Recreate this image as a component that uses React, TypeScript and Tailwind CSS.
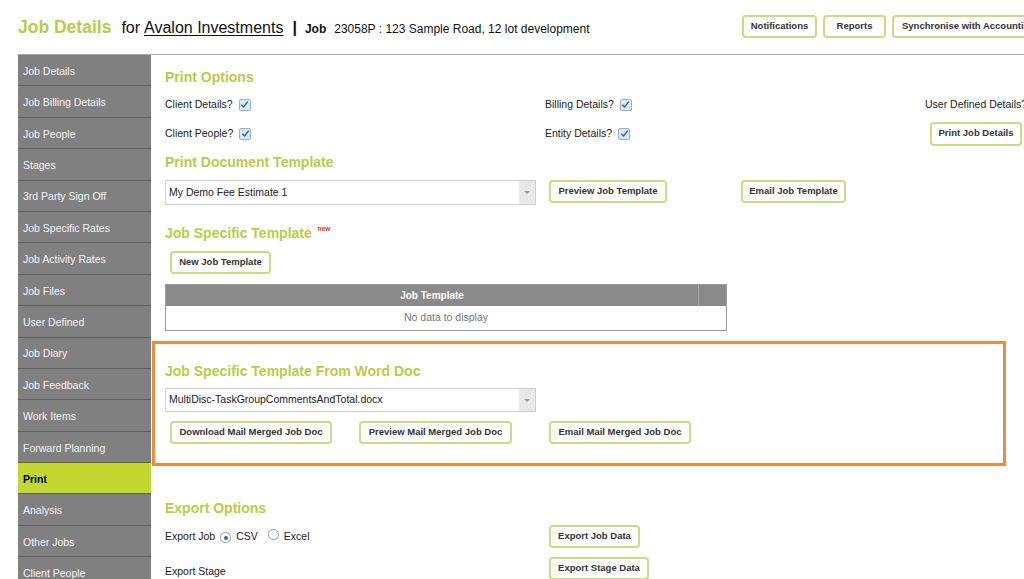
import React from "react";

const green = "text-[#b6cd45]";

function Btn({ children, className = "" }: { children: React.ReactNode; className?: string }) {
  return (
    <div
      className={
        "flex h-[23px] shrink-0 items-center justify-center whitespace-nowrap rounded-[4px] border-2 border-[#cadb80] bg-white px-[6px] text-[9.5px] font-bold text-[#333] " +
        className
      }
    >
      {children}
    </div>
  );
}

function Check() {
  return (
    <span className="ml-[6px] inline-flex h-[12px] w-[12px] items-center justify-center rounded-[2px] border border-[#9db0c8] bg-[#dbe7f4]">
      <svg width="9" height="9" viewBox="0 0 10 10">
        <path d="M1.5 5.2 L4 7.8 L8.6 1.8" fill="none" stroke="#2463ad" strokeWidth="1.6" />
      </svg>
    </span>
  );
}

function Radio({ on }: { on?: boolean }) {
  return (
    <span className="inline-flex h-[11px] w-[11px] items-center justify-center rounded-full border border-[#9a9a9a] bg-white">
      {on && <span className="h-[4px] w-[4px] rounded-full bg-[#2a66b8]" />}
    </span>
  );
}

function Select({ value }: { value: string }) {
  return (
    <div className="flex h-full w-[371px] border border-[#cfcfcf] bg-white">
      <div className="flex flex-1 items-center pl-[3px] text-[10.5px] text-[#222]">{value}</div>
      <div className="flex w-[16px] items-center justify-center bg-[#e8e8e8]">
        <span className="h-0 w-0 border-x-[3px] border-t-[3px] border-x-transparent border-t-[#999]" />
      </div>
    </div>
  );
}

function Heading({ children }: { children: React.ReactNode }) {
  return <div className={"h-[20px] text-[14px] font-bold leading-[20px] " + green}>{children}</div>;
}

const items = [
  "Job Details",
  "Job Billing Details",
  "Job People",
  "Stages",
  "3rd Party Sign Off",
  "Job Specific Rates",
  "Job Activity Rates",
  "Job Files",
  "User Defined",
  "Job Diary",
  "Job Feedback",
  "Work Items",
  "Forward Planning",
  "Print",
  "Analysis",
  "Other Jobs",
  "Client People",
];

export default function App() {
  return (
    <div className="h-[579px] w-[1024px] overflow-hidden bg-white font-['Liberation_Sans',Arial,sans-serif] text-[#222]">
      {/* Header */}
      <div className="ml-[18px] flex h-[55px] items-center border-b border-[#a9a9a9] whitespace-nowrap">
        <div className="flex w-[724px] shrink-0 items-baseline">
          <span className={"text-[17.5px] font-bold " + green}>Job Details</span>
          <span className="ml-[10px] text-[16px] text-[#111]">for</span>
          <span className="ml-[4px] text-[16px] text-[#111] underline underline-offset-2">Avalon Investments</span>
          <span className="ml-[9px] text-[16px] font-bold text-[#111]">|</span>
          <span className="ml-[8px] text-[12px] font-bold text-[#111]">Job</span>
          <span className="ml-[8px] text-[12px] text-[#111]">23058P : 123 Sample Road, 12 lot development</span>
        </div>
        <div className="flex shrink-0 gap-[6px] -mt-[2px]">
          <Btn className="w-[75px]">Notifications</Btn>
          <Btn className="w-[63px]">Reports</Btn>
          <Btn className="w-[150px] justify-start pl-[8px]">Synchronise with Accounting</Btn>
        </div>
      </div>

      <div className="flex">
        {/* Sidebar */}
        <div className="ml-[18px] w-[133px] shrink-0 bg-[#808080]">
          {items.map((it) => (
            <div
              key={it}
              className={
                "flex h-[31.4px] items-center border-b border-[#606060] pl-[5px] pt-[3px] text-[10.5px] " +
                (it === "Print" ? "bg-[#c2d830] font-bold text-black" : "text-[#f4f4f4]")
              }
            >
              {it}
            </div>
          ))}
        </div>

        {/* Content */}
        <div className="flex min-w-0 flex-1 flex-col pt-[12px] text-[10.5px]">
          <div className="pl-[14px]">
            <Heading>Print Options</Heading>
            <div className="mt-[3px] grid h-[29px] grid-cols-[380px_380px_380px] items-center whitespace-nowrap">
              <div className="flex items-center">Client Details?<Check /></div>
              <div className="flex items-center">Billing Details?<Check /></div>
              <div className="flex items-center">User Defined Details?<Check /></div>
            </div>
            <div className="grid h-[29px] grid-cols-[380px_380px_380px] items-center whitespace-nowrap">
              <div className="flex items-center">Client People?<Check /></div>
              <div className="flex items-center">Entity Details?<Check /></div>
              <div className="flex items-center pl-[5px]">
                <Btn className="h-[24px] w-[92px]">Print Job Details</Btn>
              </div>
            </div>

            <div className="mt-[4px]">
              <Heading>Print Document Template</Heading>
            </div>
            <div className="mt-[8px] flex h-[25px] items-start">
              <Select value="My Demo Fee Estimate 1" />
              <Btn className="ml-[13px] w-[118px]">Preview Job Template</Btn>
              <Btn className="ml-[74px] w-[105px]">Email Job Template</Btn>
            </div>

            <div className="mt-[18px] flex items-start">
              <Heading>Job Specific Template</Heading>
              <span className="ml-[6px] mt-[1px] text-[6.5px] font-bold text-[#e0312a]">new</span>
            </div>
            <div className="mt-[8px] flex pl-[5px]">
              <Btn className="w-[101px]">New Job Template</Btn>
            </div>

            <div className="mt-[10px] w-[562px] border border-[#9a9a9a]">
              <div className="flex h-[21px] bg-[#8a8a8a] text-[10px] font-bold text-white">
                <div className="flex flex-1 items-center justify-center">Job Template</div>
                <div className="w-[28px] border-l border-[#a8a8a8]" />
              </div>
              <div className="flex h-[24px] items-center justify-center text-[10.5px] text-[#777]">
                No data to display
              </div>
            </div>
          </div>

          {/* Highlight box */}
          <div className="ml-[1px] mt-[10px] w-[854px] border-[3px] border-[#ef8b3d] pb-[19px] pl-[10px] pt-[17px]">
            <Heading>Job Specific Template From Word Doc</Heading>
            <div className="mt-[7px] flex h-[24px]">
              <Select value="MultiDisc-TaskGroupCommentsAndTotal.docx" />
            </div>
            <div className="mt-[9px] flex">
              <Btn className="ml-[5px] w-[162px]">Download Mail Merged Job Doc</Btn>
              <Btn className="ml-[27px] w-[153px]">Preview Mail Merged Job Doc</Btn>
              <Btn className="ml-[37px] w-[142px]">Email Mail Merged Job Doc</Btn>
            </div>
          </div>

          <div className="pl-[14px]">
            <div className="mt-[32px]">
              <Heading>Export Options</Heading>
            </div>
            <div className="mt-[7px] flex h-[23px] items-center whitespace-nowrap">
              <div className="flex w-[380px] items-center">
                <span>Export Job</span>
                <span className="ml-[5px]"><Radio on /></span>
                <span className="ml-[5px]">CSV</span>
                <span className="ml-[10px]"><Radio /></span>
                <span className="ml-[5px]">Excel</span>
              </div>
              <Btn className="ml-[4px] w-[91px]">Export Job Data</Btn>
            </div>
            <div className="mt-[9px] flex h-[23px] items-center whitespace-nowrap">
              <div className="w-[380px] pt-[7px]">Export Stage</div>
              <Btn className="ml-[4px] w-[100px]">Export Stage Data</Btn>
            </div>
          </div>
        </div>
      </div>
    </div>
  );
}
